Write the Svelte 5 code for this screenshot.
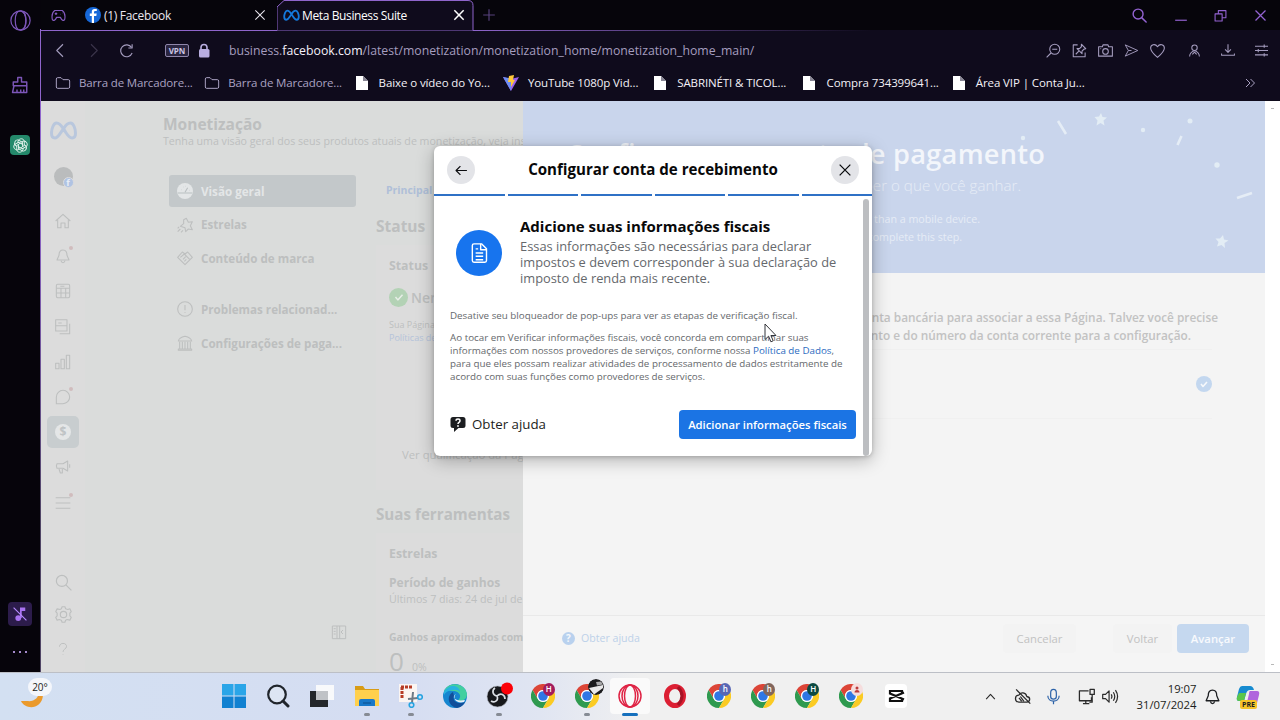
<script lang="ts">
    const icons: Record<string, string[]> = {
        search: ['M10 3a7 7 0 1 1 0 14a7 7 0 0 1 0-14z', 'M15 15l7 7'],
        zoomOut: ['M14 2a8 8 0 1 1 0 16a8 8 0 0 1 0-16z', 'M8 16l-7 7', 'M10 10h8'],
        close: ['M4 4l16 16M20 4L4 20'],
        plus: ['M12 2v20M2 12h20'],
        minimize: ['M2 21h20'],
        restore: ['M2 9h13v13H2z', 'M8 9V3h14v13h-7'],
        back: ['M16 2L6 12l10 10'],
        forward: ['M8 2l10 10L8 22'],
        reload: ['M21 16a9.5 9.5 0 1 1-1-9', 'M21 2v6h-6'],
        folder: ['M2 6q0-2 2-2h5l3 3h8q2 0 2 2v9q0 2-2 2H4q-2 0-2-2z'],
        pin: ['M9 3H2v19h19v-7', 'M15 2l7 7-3 1-3 3 0 4-8-8 4 0 3-3z', 'M11 13l-5 5'],
        camera: ['M1 6h6l1-3h8l1 3h6v15H1z', 'M12 9a4.500 4.500 0 1 1 0 9a4.500 4.500 0 0 1 0-9z', 'M4 9h1'],
        send: ['M2 3l20 9L2 21l5-9z', 'M7 12h5'],
        heart: ['M12 23C6 18 1 13 1 8c0-5 7-8 11-2c4-6 11-3 11 2c0 5-5 10-11 15z'],
        user: ['M12 2a5 5 0 1 1 0 10a5 5 0 0 1 0-10z', 'M3 23c0-6 4-9 9-11c5 2 9 5 9 11', 'M8 19l4-4 4 4'],
        download: ['M12 2v13M7 11l5 5 5-5', 'M1 18v3h22v-3'],
        sliders: ['M0 4h24M0 12h24M0 20h24', 'M17 1v6M6 9v6M17 17v6'],
        more: ['M4 4l8 8-8 8M13 4l8 8-8 8'],
        opera: ['M12 1a11 11 0 1 0 0 22a11 11 0 0 0 0-22z', 'M12 1c-4 0-6 5-6 11s2 11 6 11s6-5 6-11s-2-11-6-11z', 'M12 1c8 2 9 20 0 22'],
        cleaner: ['M9 8V2h5v6h7v5H3V8z', 'M4 13l-2 9h19v-9', 'M8 22v-4M13 22v-4M17 22v-4'],
        gamepad: ['M6 4h12c3 2 5 8 4 14-2 4-5 1-7-3H9c-2 4-5 7-7 3C1 12 3 6 6 4z', 'M6 9h4M8 7v4', 'M15 10h.5M18 8h.5'],
        home: ['M1 12L12 2l11 10', 'M4 10v12h5v-7h6v7h5V10'],
        bell: ['M12 3c-5 0-6 4-6 8l-3 7h18l-3-7c0-4-1-8-6-8z', 'M9 19c1 4 5 4 6 0'],
        planner: ['M2 4q0-2 2-2h16q2 0 2 2v16q0 2-2 2H4q-2 0-2-2z', 'M2 8h20M2 15h20M9 8v14M16 8v14M8 5h6'],
        content: ['M1 1h17v17H1z', 'M1 10h17M5 6h5', 'M22 7v15H7'],
        chart: ['M1 14h5v8H1zM9 8h5v14H9zM17 2h5v20h-5z'],
        inbox: ['M2 22V12A10 10 0 1 1 12 22z'],
        megaphone: ['M3 7h9l7-4v15l-7-4H3q-2-3 0-7z', 'M6 15l2 6h3v-6', 'M22 8v5'],
        menu: ['M1 4h22M1 12h22M1 20h22'],
        gear: ['M12 7.500a4.500 4.500 0 1 1 0 9a4.500 4.500 0 0 1 0-9z', 'M10 1h4l1 3 3 1 3-1 2 4-2 2v4l2 2-2 4-4-1-2 1-1 3h-4l-1-3-3-1-3 1-2-4 2-2v-4L1 8l2-4 4 1 2-1z'],
        question: ['M6 8c0-8 13-7 12 0c0 4-6 4-6 9', 'M12 21v1'],
        star: ['M14 2l3 6 6-1-3 6 3 6-6-1-4 4-1-6-7-2 5-4V4z', 'M1 22l4-4M6 23l3-3M1 17l2-2'],
        handshake: ['M1 11l7-8 4 3 4-3 7 8-11 11z', 'M5 11l6-5 8 8M9 14l4-4M11 17l3-3'],
        alert: ['M12 1a11 11 0 1 1 0 22a11 11 0 0 1 0-22z', 'M12 6v8M12 17v1'],
        bank: ['M2 9q1-5 10-7q9 2 10 7zM2 21h20v2H2z', 'M4 10v11M8 10v11M12 10v11M16 10v11M20 10v11'],
        gauge: ['M1 15h22', 'M12 14l4-7M6 10h.5M9 6h.5M18 11h.5M12 5h.5'],
        panel: ['M2 3h20v19H2z', 'M9 3v19M13 3v19M4 7h3M4 11h3M4 15h3M18 9l-3 3 3 3'],
        arrowLeft: ['M22 12H3M10 4l-8 8 8 8'],
        doc: ['M4 3q0-2 2-2h9l6 6v14q0 2-2 2H6q-2 0-2-2z', 'M14 1v7h7M8 7h3M8 12h9M8 16h9M8 20h9'],
        check: ['M6 12l4 5 8-9'],
        up: ['M4 17l8-9 8 9'],
        cloudOff: ['M7 20h11c5-1 6-7 0-8c-1-6-9-7-11-2c-6 0-7 9 0 10z', 'M3 2l20 20M9 12l5 7M7 14l4 5'],
        mic: ['M12 2c-4 0-4 3-4 5v5c0 5 8 5 8 0V7c0-2 0-5-4-5z', 'M4 11c0 10 16 10 16 0M12 19v4'],
        network: ['M15 4H2v14h17v-5M7 22h9M11 18v4', 'M17 2h6v7h-6zM20 9v11h-4'],
        volume: ['M1 9h4l5-5v16l-5-5H1z', 'M13 9q2 3 0 6M16 6q4 6 0 12M19 3q6 9 0 18'],
    };

    const bookmarks = [
        { kind: 'folder', label: 'Barra de Marcadore...' },
        { kind: 'folder', label: 'Barra de Marcadore...' },
        { kind: 'file', label: 'Baixe o vídeo do Yo...' },
        { kind: 'vite', label: 'YouTube 1080p Vid...' },
        { kind: 'file', label: 'SABRINÉTI & TICOL...' },
        { kind: 'file', label: 'Compra 734399641...' },
        { kind: 'file', label: 'Área VIP | Conta Ju...' },
    ];

    const rail = [
        { icon: 'home' },
        { icon: 'bell', dot: true },
        { icon: 'planner' },
        { icon: 'content' },
        { icon: 'chart' },
        { icon: 'inbox', dot: true },
        { icon: 'money', active: true },
        { icon: 'megaphone' },
        { icon: 'menu', dot: true },
    ];

    const nav = [
        { icon: 'gauge', label: 'Visão geral', active: true },
        { icon: 'star', label: 'Estrelas' },
        { icon: 'handshake', label: 'Conteúdo de marca' },
        { icon: 'alert', label: 'Problemas relacionad...', gap: true },
        { icon: 'bank', label: 'Configurações de paga...' },
    ];

    const apps = [
        { kind: 'windows' },
        { kind: 'search' },
        { kind: 'tasks' },
        { kind: 'explorer', running: true },
        { kind: 'snip', running: true },
        { kind: 'edge' },
        { kind: 'obs', running: true },
        { kind: 'chrome', badge: 'H', tone: 'wine' },
        { kind: 'chrome', badge: '', tone: 'photo', running: true },
        { kind: 'operagx', active: true },
        { kind: 'opera' },
        { kind: 'chrome', badge: 'h', tone: 'indigo' },
        { kind: 'chrome', badge: 'h', tone: 'brown' },
        { kind: 'chrome', badge: 'H', tone: 'green' },
        { kind: 'chrome', badge: '', tone: 'pink' },
        { kind: 'capcut' },
    ];
</script>

{#snippet icon(name: string, size: number, width = 1.6)}
    <svg class="icon" width={size} height={size} viewBox="0 0 24 24" stroke-width={width}>
        {#each icons[name] as d}
            <path {d} />
        {/each}
    </svg>
{/snippet}

{#snippet meta(w: number, h: number)}
    <svg class="meta" width={w} height={h} viewBox="0 0 28 20">
        <path d="M14 8C11 3 9 2 7 2C4 2 2 8 2 12c0 3 1 5 3.500 5C9 17 11 11 14 8c2-4 4-6 7-6c3 0 5 6 5 10c0 3-1 5-3.500 5C19 17 17 12 14 8z" />
    </svg>
{/snippet}

<div class="desktop">
    <div class="browser">
        <aside class="gx">
            <div class="gx-logo">{@render icon('opera', 21, 1.4)}</div>
            <div class="gx-clean">{@render icon('cleaner', 18, 1.9)}</div>
            <div class="gpt">
                <svg width="15" height="15" viewBox="0 0 24 24">
                    {#each [0, 60, 120, 180, 240, 300] as r}
                        <path d="M8 8V5c2-5 9-5 10 0v7l-6 4" transform={`rotate(${r} 12 12)`} />
                    {/each}
                </svg>
            </div>
            <div class="mute">
                <svg width="14" height="14" viewBox="0 0 24 24">
                    <circle cx="9" cy="19" r="5" />
                    <path d="M12 1h9v6h-6v12h-3z" />
                    <path class="slash" d="M1 1l22 22" />
                </svg>
            </div>
            <div class="dots"><i></i><i></i><i></i></div>
        </aside>

        <div class="window">
            <header class="tabs">
                <div class="tab-pad">{@render icon('gamepad', 15, 1.9)}</div>
                <div class="tab first">
                    <svg width="16" height="16" viewBox="0 0 16 16">
                        <circle cx="8" cy="8" r="8" fill="#1668d8" />
                        <path d="M9 16V9h2.300l.4-2.500H9V5q0-1 1.300-1h1.500V2H9.500Q6.800 2 6.800 4.800v1.700H4.800V9h2v7z" fill="#fff" />
                    </svg>
                    <span class="t1">(1) Facebook</span>
                    <b>{@render icon('close', 14, 1.8)}</b>
                </div>
                <div class="tab current">
                    <svg class="outline" width="198" height="31" viewBox="0 0 198 31">
                        <path d="M0 30.500V7L7 .5h184q5 0 5 5v25" />
                    </svg>
                    {@render meta(17, 13)}
                    <span class="t2">Meta Business Suite</span>
                    <b>{@render icon('close', 14, 2.6)}</b>
                </div>
                <div class="new">{@render icon('plus', 14, 2)}</div>
                <div class="controls">
                    {@render icon('search', 17, 2)}
                    {@render icon('minimize', 14, 2)}
                    {@render icon('restore', 13, 2)}
                    {@render icon('close', 15, 2)}
                </div>
            </header>

            <div class="toolbar">
                <span class="back">{@render icon('back', 15, 1.7)}</span>
                <span class="fwd">{@render icon('forward', 15, 1.7)}</span>
                <span class="reload">{@render icon('reload', 15, 1.8)}</span>
                <span class="vpn">VPN</span>
                <svg class="lock" width="12" height="15" viewBox="0 0 12 15">
                    <path d="M3 7V4.500a3 3 0 0 1 6 0V7" fill="none" stroke="#b9aee0" stroke-width="1.600" />
                    <rect x="1" y="6" width="10.500" height="8.500" rx="1.500" fill="#b9aee0" />
                </svg>
                <span class="url">business.<em>facebook.com</em>/latest/monetization/monetization_home/monetization_home_main/</span>
                <div class="actions">
                    {@render icon('zoomOut', 15, 1.7)}
                    {@render icon('pin', 15, 1.7)}
                    {@render icon('camera', 15, 1.7)}
                    {@render icon('send', 15, 1.5)}
                    {@render icon('heart', 15, 1.7)}
                </div>
                <div class="actions right">
                    {@render icon('user', 13, 1.9)}
                    {@render icon('download', 14, 1.8)}
                    {@render icon('sliders', 13, 2)}
                </div>
            </div>

            <nav class="bookmarks">
                {#each bookmarks as b}
                    <div class="bookmark" class:bright={b.kind !== 'folder'}>
                        {#if b.kind === 'folder'}
                            {@render icon('folder', 16, 1.5)}
                        {:else if b.kind === 'vite'}
                            <svg width="16" height="16" viewBox="0 0 16 16">
                                <path d="M0 2l8 14 8-14-8 2z" fill="#9b62ee" />
                                <path d="M0 2l8 14V3.500z" fill="#6d8df3" />
                                <path d="M6 1l5-1-1 5h2l-4 7V7H5z" fill="#ffc83a" />
                            </svg>
                        {:else}
                            <svg width="16" height="16" viewBox="0 0 16 16">
                                <path d="M2 1h7l5 5v9H2z" fill="#fff" />
                                <path d="M9 1v5h5z" fill="#888594" />
                            </svg>
                        {/if}
                        <span>{b.label}</span>
                    </div>
                {/each}
                <div class="more">{@render icon('more', 12, 2)}</div>
            </nav>

            <main class="page">
                <section class="suite">
                    <aside class="rail">
                        <div class="rail-logo">{@render meta(29, 20)}</div>
                        <div class="avatar"><i></i><u>f</u></div>
                        {#each rail as r}
                            <div class="rail-item" class:active={r.active}>
                                {#if r.icon === 'money'}
                                    <span class="coin">$</span>
                                {:else}
                                    {@render icon(r.icon, 16, 1.6)}
                                {/if}
                                {#if r.dot}<i class="dot"></i>{/if}
                            </div>
                        {/each}
                        <div class="rail-end">
                            {@render icon('search', 19, 1.5)}
                            {@render icon('gear', 17, 1.6)}
                            <span>{@render icon('question', 14, 1.7)}</span>
                        </div>
                    </aside>

                    <div class="suite-body">
                        <h1>Monetização</h1>
                        <p class="lead">Tenha uma visão geral dos seus produtos atuais de monetização, veja ins</p>
                        <div class="columns">
                            <div class="side">
                                {#each nav as n}
                                    <div class="side-item" class:active={n.active} class:gap={n.gap}>
                                        <span class="side-icon">{@render icon(n.icon, 16, 1.6)}</span>
                                        {n.label}
                                    </div>
                                {/each}
                                <div class="toggle">{@render icon('panel', 16, 1.5)}</div>
                            </div>
                            <div class="feed">
                                <div class="main-tab">Principal</div>
                                <h2>Status</h2>
                                <div class="card status">
                                    <h3>Status</h3>
                                    <div class="ok"><span>{@render icon('check', 14, 2.5)}</span>Nen</div>
                                    <p>Sua Página</p>
                                    <p class="link">Políticas de</p>
                                    <div class="qualify">Ver qualificação da Pág</div>
                                </div>
                                <h2 class="tools">Suas ferramentas</h2>
                                <div class="card earn">
                                    <h3>Estrelas</h3>
                                    <h4>Período de ganhos</h4>
                                    <p class="range">Últimos 7 dias: 24 de jul de</p>
                                    <h5>Ganhos aproximados com</h5>
                                    <div class="total"><big>0</big><small>0%</small></div>
                                </div>
                            </div>
                        </div>
                    </div>
                </section>

                <section class="drawer">
                    <div class="banner">
                        <h2>Configurar sua conta de pagamento</h2>
                        <p class="b1">para receber o que você ganhar.</p>
                        <p class="b2">computer rather than a mobile device.</p>
                        <p class="b3">documents to complete this step.</p>
                        <svg class="confetti" width="742" height="172" viewBox="523 101 742 172">
                            <path d="M1058 121l8 13M1181.500 136l-4 9M1237 198l15-5" />
                            <g>
                                <circle cx="1143" cy="130" r="2.200" />
                                <circle cx="1190" cy="121" r="2.500" />
                                <circle cx="1023" cy="138" r="2.200" />
                                <circle cx="1217" cy="165" r="2.700" />
                                <path d="M1101 113l1.500 4 4.500.5-3.500 3 1 5-4-2.500-4 2.500 1-5-3-3.500 4.500-.5z" />
                                <path d="M1223 235l1 4.500 4.500 1-4 2.500.5 5-3.500-3-4.500 1.500 1.500-4.500-3-3.500h4.500z" />
                            </g>
                        </svg>
                    </div>
                    <div class="drawer-main">
                        <p class="d1">conta bancária para associar a essa Página. Talvez você precise</p>
                        <p class="d2">roteamento e do número da conta corrente para a configuração.</p>
                        <div class="choice"><span>{@render icon('check', 12, 3.2)}</span></div>
                    </div>
                    <footer class="drawer-foot">
                        <span class="q">?</span>
                        <span class="help">Obter ajuda</span>
                        <span class="btn cancel">Cancelar</span>
                        <span class="btn return">Voltar</span>
                        <span class="btn next">Avançar</span>
                    </footer>
                </section>
                <div class="scroll"><i></i><i></i></div>

                <section class="dialog">
                    <header>
                        <span class="round">{@render icon('arrowLeft', 13, 2.2)}</span>
                        <h2>Configurar conta de recebimento</h2>
                        <span class="round">{@render icon('close', 16, 1.9)}</span>
                    </header>
                    <div class="steps">
                        {#each Array(6) as _}<i></i>{/each}
                    </div>
                    <div class="dialog-body">
                        <div class="content">
                            <div class="intro">
                                <span class="disc">{@render icon('doc', 20, 1.7)}</span>
                                <div>
                                    <h3>Adicione suas informações fiscais</h3>
                                    <p>Essas informações são necessárias para declarar<br />impostos e devem corresponder à sua declaração de<br />imposto de renda mais recente.</p>
                                </div>
                            </div>
                            <p class="fine">Desative seu bloqueador de pop-ups para ver as etapas de verificação fiscal.</p>
                            <p class="fine">Ao tocar em Verificar informações fiscais, você concorda em compartilhar suas<br />informações com nossos provedores de serviços, conforme nossa <a href="#dados">Política de Dados</a>,<br />para que eles possam realizar atividades de processamento de dados estritamente de<br />acordo com suas funções como provedores de serviços.</p>
                            <div class="end">
                                <svg width="16" height="16" viewBox="0 0 16 16">
                                    <path d="M3 1h10q2.500 0 2.500 2.500v6Q15.500 12 13 12H8.500L4 16v-4H3Q.5 12 .5 9.500v-6Q.5 1 3 1z" fill="#1c1e21" />
                                    <path d="M6 4.800c0-2.300 4-2.300 4 0C10 6.500 8 6.300 8 8" fill="none" stroke="#fff" stroke-width="1.500" />
                                    <circle cx="8" cy="10" r=".9" fill="#fff" />
                                </svg>
                                <span>Obter ajuda</span>
                                <button>Adicionar informações fiscais</button>
                            </div>
                        </div>
                        <div class="thumb"></div>
                    </div>
                </section>

                <svg class="cursor" width="14" height="22" viewBox="0 0 14 22">
                    <path d="M1 1v15.500l3.600-3.300 2.300 5.600 2.300-1-2.300-5.300H12z" />
                </svg>
            </main>
        </div>
    </div>

    <footer class="taskbar">
        <div class="weather">
            <svg width="24" height="24" viewBox="0 0 24 24"><path d="M19 6c0 7-5 11-12 10H1c4 9 21 9 22-6z" /></svg>
            <span>20°</span>
        </div>
        <div class="apps">
            {#each apps as a}
                <div class="app" class:current={a.active} class:running={a.running}>
                    <div class="glyph">
                        {#if a.kind === 'windows'}
                            <svg width="24" height="24" viewBox="0 0 24 24">
                                <path d="M0 0h11.500v11.500H0zM12.500 0H24v11.500H12.500z" fill="#2aa5e8" />
                                <path d="M0 12.500h11.500V24H0zM12.500 12.500H24V24H12.500z" fill="#1181d1" />
                            </svg>
                        {:else if a.kind === 'search'}
                            <svg width="24" height="24" viewBox="0 0 24 24" fill="none" stroke="#20252c" stroke-width="2.200" stroke-linecap="round">
                                <circle cx="11" cy="10.500" r="8.800" fill="#dde5f3" /><path d="M17 17l5 5" stroke-width="3" />
                            </svg>
                        {:else if a.kind === 'tasks'}
                            <svg width="24" height="24" viewBox="0 0 24 24">
                                <path d="M0 7h18v16H0z" fill="#24272b" /><path d="M6 1h18v15H6z" fill="#f8f9fb" /><path d="M6 7h12v9H6z" fill="#bfc2c6" />
                            </svg>
                        {:else if a.kind === 'explorer'}
                            <svg width="26" height="24" viewBox="0 0 26 24">
                                <path d="M1 2h8l2 3h14v9H1z" fill="#d89c16" /><path d="M1 6h24v16H1z" fill="#ffd04d" />
                                <path d="M5 22v-5q0-2 2-2h12q2 0 2 2v5z" fill="#1878c9" /><path d="M9 19h8" stroke="#0b4c8a" />
                            </svg>
                        {:else if a.kind === 'snip'}
                            <svg width="24" height="24" viewBox="0 0 24 24" fill="none">
                                <path d="M0 0h18v18H0z" fill="#fbf5f2" /><path d="M2 3h12M3 3v12" stroke="#b63b25" stroke-width="3" stroke-dasharray="3 1" />
                                <path d="M9 15l10-1M14 8l-1 11" stroke="#6f7984" stroke-width="2" /><circle cx="21" cy="13" r="2.300" stroke="#25a3e0" stroke-width="1.600" /><circle cx="12.500" cy="21" r="2.300" stroke="#25a3e0" stroke-width="1.600" />
                            </svg>
                        {:else if a.kind === 'edge'}
                            <svg width="24" height="24" viewBox="0 0 24 24">
                                <circle cx="12" cy="12" r="12" fill="#1686d0" />
                                <path d="M1 8C4-3 22-2 24 10c0 5-4 8-10 7 5-3 4-9-3-10Q4 6 1 8z" fill="#43cfa0" />
                                <path d="M1 8C7-2 17 2 17 8q-2-3-8-2-6 1-8 5z" fill="#28b3df" />
                                <path d="M10 8c-7 4-5 14 4 16 5-1 7-4 8-6-7 3-13-1-11-6z" fill="#124f9a" />
                                <path d="M13 10c-5 3-1 8 9 6l-1 2c-8 2-12-4-8-8z" fill="#e9eff8" />
                            </svg>
                        {:else if a.kind === 'obs'}
                            <svg width="28" height="28" viewBox="0 0 28 28">
                                <circle cx="12.500" cy="14.500" r="10.500" fill="#17181b" stroke="#aeb3bd" stroke-width=".6" />
                                <path d="M12 14c-5-1-5-6-2-8M12 14c4-4 8-1 8 3M12 14c2 5-3 7-6 5" fill="none" stroke="#dcdfe4" stroke-width="1.700" />
                                <circle cx="22" cy="6.500" r="6" fill="#fb0007" />
                            </svg>
                        {:else if a.kind === 'chrome'}
                            <svg width="24" height="24" viewBox="0 0 24 24">
                                <path d="M1.600 6A12 12 0 0 1 22.400 6H12A6 6 0 0 0 6.800 15z" fill="#dc4537" />
                                <path d="M1.600 6A12 12 0 0 0 12 24l5.200-9A6 6 0 0 1 6.800 15z" fill="#2f9a4f" />
                                <path d="M22.400 6A12 12 0 0 1 12 24l5.200-9A6 6 0 0 0 12 6z" fill="#fbcb23" />
                                <circle cx="12" cy="12" r="6" fill="#fff" /><circle cx="12" cy="12" r="4.800" fill="#2f77e5" />
                            </svg>
                            {#if a.tone === 'photo'}
                                <svg class="badge photo" width="16" height="16" viewBox="0 0 16 16">
                                    <circle cx="8" cy="8" r="8" fill="#1b1b1d" />
                                    <path d="M1 9l14-3v3L6 15.500z" fill="#e9e9ea" /><path d="M8 3l5-.5 2 3-6 1z" fill="#a9a9ab" />
                                </svg>
                            {:else if a.tone === 'pink'}
                                <svg class="badge pink" width="12" height="13" viewBox="0 0 12 13">
                                    <circle cx="6" cy="5" r="1.500" fill="#bd3a3a" /><path d="M3.500 9.500q0-2.500 2.500-2.500t2.500 2.500z" fill="#bd3a3a" />
                                </svg>
                            {:else}
                                <span class="badge {a.tone}">{a.badge}</span>
                            {/if}
                        {:else if a.kind === 'operagx'}
                            <svg width="24" height="24" viewBox="0 0 24 24" fill="none" stroke="#df2445" stroke-width="1.500">
                                <circle cx="12" cy="12" r="11" /><ellipse cx="12" cy="12" rx="5.500" ry="11" /><ellipse cx="12" cy="12" rx="8" ry="11" />
                            </svg>
                        {:else if a.kind === 'opera'}
                            <svg width="24" height="24" viewBox="0 0 24 24" fill="none" stroke="#dc1f33">
                                <ellipse cx="12" cy="12" rx="8.500" ry="9.500" stroke-width="5" /><path d="M15 3q8 9 0 18" stroke="#a71325" stroke-width="3" />
                            </svg>
                        {:else}
                            <svg width="22" height="24" viewBox="0 0 22 24" fill="none">
                                <rect width="22" height="24" rx="4" fill="#fff" /><path d="M17 9V7H5v2.500l14 6M17 15v2H5v-2.500l14-6" stroke="#111" stroke-width="2.200" />
                            </svg>
                        {/if}
                    </div>
                    <i class="mark"></i>
                </div>
            {/each}
        </div>
        <div class="tray">
            {@render icon('up', 13, 2)}
            {@render icon('cloudOff', 17, 1.8)}
            <span class="mic">{@render icon('mic', 17, 1.7)}</span>
            {@render icon('network', 17, 1.8)}
            <span class="vol">{@render icon('volume', 17, 1.7)}</span>
        </div>
        <div class="clock">19:07<br />31/07/2024</div>
        <div class="notify">{@render icon('bell', 17, 1.8)}</div>
        <div class="copilot">
            <svg width="24" height="24" viewBox="0 0 24 24">
                <path d="M6 1h8q3 0 4 4h-4q-3 0-4 4L8 16H3q-3 0-2-4L3 4q1-3 3-3z" fill="#168bd0" />
                <path d="M3 8h7l-2 8H3q-3 0-2-4z" fill="#5bc64b" />
                <path d="M14 6h7q3 0 2 4l-2 8q-1 4-4 4H7q3-1 4-5l2-8q0-3 1-3z" fill="#b065dd" />
            </svg>
            <span>PRE</span>
        </div>
    </footer>
</div>

<style>
    :global(body) {
        margin: 0;
        overflow: hidden;
    }

    .desktop {
        width: 1280px;
        height: 720px;
        overflow: hidden;
        font-family: 'Open Sans', 'Noto Sans', sans-serif;
        color: #1c1e21;
    }

    .desktop * {
        box-sizing: border-box;
    }

    h1, h2, h3, h4, h5, p {
        margin: 0;
        white-space: nowrap;
    }

    svg {
        display: block;
        flex: none;
    }

    .icon {
        fill: none;
        stroke: currentColor;
        stroke-linejoin: round;
    }

    .meta path {
        fill: none;
        stroke: currentColor;
        stroke-width: 3;
    }

    .browser {
        display: flex;
        height: 672px;
        background: #06040b;
    }

    /* browser sidebar */
    .gx {
        width: 40px;
        display: flex;
        flex-direction: column;
        align-items: center;
        color: #7c56b8;
    }

    .gx-logo {
        margin-top: 10px;
    }

    .gx-clean {
        margin-top: 45px;
    }

    .gpt {
        display: grid;
        place-items: center;
        width: 20px;
        height: 20px;
        margin-top: 41px;
        border-radius: 4px;
        background: #24896b;
    }

    .gpt path {
        fill: none;
        stroke: #e5f3ee;
        stroke-width: 1.5;
    }

    .mute {
        display: grid;
        place-items: center;
        width: 24px;
        height: 24px;
        margin-top: 447px;
        border-radius: 4px;
        background: #2c1c4b;
    }

    .mute svg {
        fill: #a873f0;
    }

    .mute .slash {
        stroke: #b68aff;
        stroke-width: 2;
    }

    .dots {
        display: flex;
        gap: 4px;
        margin-top: 25px;
    }

    .dots i {
        width: 2px;
        height: 2px;
        background: #a48acc;
    }

    .window {
        width: 1240px;
        border-left: 1px solid #4c3a6e;
        border-image: linear-gradient(#06040b 30px, #8f65cc 30px, #8f65cc 200px, #504565 520px) 1;
    }

    /* tab strip */
    .tabs {
        display: flex;
        align-items: center;
        height: 31px;
        border-bottom: 1px solid;
        border-image: linear-gradient(90deg, #8f65cc 430px, #0f0b1c 830px) 1;
        background: #06050b;
        color: #e9e6ef;
        font-size: 12px;
    }

    .tab-pad {
        width: 44px;
        padding-left: 10px;
        color: #8359bd;
    }

    .tab {
        display: flex;
        align-items: center;
        height: 30px;
    }

    .tab b {
        margin-left: auto;
    }

    .first {
        width: 192px;
        padding-right: 10px;
    }

    .t1 {
        margin-left: 3px;
        letter-spacing: -0.3px;
    }

    .current {
        position: relative;
        width: 197px;
        padding: 0 8px 0 6px;
        color: #fff;
    }

    .current > :not(.outline) {
        position: relative;
    }

    .outline {
        position: absolute;
        left: 0;
        top: 0;
    }

    .outline path {
        fill: #0f0b1c;
        stroke: #8f65cc;
    }

    .current .meta {
        color: #1479dc;
    }

    .t2 {
        margin-left: 2px;
        letter-spacing: -0.38px;
    }

    .new {
        margin-left: 8px;
        color: #57427d;
    }

    .controls {
        display: flex;
        align-items: center;
        gap: 26px;
        margin-left: auto;
        padding-right: 12px;
        color: #9363d2;
    }

    .toolbar {
        display: flex;
        align-items: center;
        height: 38px;
        background: #0f0b1c;
        color: #a59dbf;
    }

    .back {
        margin-left: 12px;
    }

    .fwd {
        margin-left: 18px;
        color: #3b354b;
    }

    .reload {
        margin-left: 18px;
    }

    .vpn {
        width: 24px;
        height: 13px;
        margin-left: 31px;
        border: 1px solid #8f86aa;
        border-radius: 2px;
        background: #2a2540;
        color: #cbc4e2;
        font-size: 8px;
        font-weight: 700;
        line-height: 11px;
        text-align: center;
    }

    .lock {
        margin-left: 9px;
    }

    .url {
        margin-left: 19px;
        font-size: 12.27px;
        white-space: nowrap;
    }

    .url em {
        color: #f4f1fb;
        font-style: normal;
    }

    .actions {
        display: flex;
        align-items: center;
        gap: 11px;
        margin-left: auto;
    }

    .right {
        gap: 20px;
        margin: 0 12px 0 23px;
    }

    .bookmarks {
        display: flex;
        align-items: center;
        height: 32px;
        padding: 0 24px 5px 14px;
        background: #0f0b1c;
        color: #aaa2c2;
        font-size: 11.5px;
    }

    .bookmark {
        display: flex;
        align-items: center;
        gap: 8px;
        width: 149.3px;
        letter-spacing: -0.14px;
        white-space: nowrap;
    }

    .bright {
        gap: 9px;
        color: #f3f1f7;
        letter-spacing: -0.1px;
    }

    .more {
        margin-left: auto;
    }

    /* page */
    .page {
        position: relative;
        display: flex;
        height: 571px;
        overflow: hidden;
        background: #fff;
    }

    .suite {
        display: flex;
        width: 482px;
        overflow: hidden;
        background: #dadcdb;
        color: #bdbfbf;
    }

    .rail {
        display: flex;
        flex: none;
        flex-direction: column;
        align-items: center;
        width: 44px;
        padding-top: 20px;
        background: #dcdcdc;
        color: #bdbfbf;
    }

    .rail-logo {
        color: #b9c7dd;
    }

    .avatar {
        position: relative;
        width: 19px;
        height: 19px;
        margin: 26px 0 19px;
        border-radius: 50%;
        background: #babcbd;
    }

    .avatar u {
        position: absolute;
        right: -1px;
        bottom: -2px;
        width: 11px;
        height: 11px;
        border: 1px solid #dcdcdc;
        border-radius: 50%;
        background: #b0c3e3;
        color: #e8edf5;
        font-size: 9px;
        font-weight: 700;
        line-height: 10px;
        text-align: center;
        text-decoration: none;
    }

    .rail-item {
        position: relative;
        display: grid;
        place-items: center;
        width: 32px;
        height: 32px;
        margin-bottom: 3.2px;
        border-radius: 5px;
    }

    .rail-item.active {
        background: #c8cdcf;
    }

    .coin {
        width: 16px;
        height: 16px;
        border-radius: 50%;
        background: #e4e6e7;
        color: #bfc3c5;
        font-size: 12px;
        font-weight: 700;
        line-height: 16px;
        text-align: center;
    }

    .dot {
        position: absolute;
        top: 6px;
        right: 6px;
        width: 4px;
        height: 4px;
        border-radius: 50%;
        background: #d0bcbd;
    }

    .rail-end {
        display: flex;
        flex-direction: column;
        align-items: center;
        gap: 14px;
        margin: auto 0 16px;
    }

    .rail-end span {
        padding-top: 5px;
    }

    .suite-body {
        flex: none;
        width: 700px;
        padding-top: 13px;
    }

    h1 {
        margin-left: 78px;
        font-size: 15.5px;
        line-height: 20px;
        font-weight: 700;
    }

    .lead {
        margin-left: 78px;
        font-size: 10.65px;
        line-height: 15px;
    }

    .columns {
        display: flex;
        padding-top: 26px;
    }

    .side {
        width: 291px;
        padding-left: 84px;
    }

    .side-item {
        display: flex;
        align-items: center;
        width: 187px;
        height: 32px;
        margin-bottom: 1.7px;
        padding-left: 8px;
        border-radius: 3px;
        font-size: 11.65px;
        font-weight: 700;
        white-space: nowrap;
    }

    .side-item.gap {
        margin-top: 19px;
    }

    .side-item.active {
        background: #c3c8ca;
        color: #e3e6e7;
    }

    .side-icon {
        width: 24px;
    }

    .active .side-icon :global(svg) {
        border-radius: 50%;
        background: #e3e6e7;
        color: #b9bfc1;
    }

    .toggle {
        margin: 265px 0 0 162px;
    }

    .feed {
        width: 409px;
    }

    .main-tab {
        height: 29px;
        padding-left: 10px;
        color: #afbfd8;
        font-size: 10.5px;
        font-weight: 700;
        line-height: 31px;
    }

    .feed h2 {
        height: 41px;
        font-size: 15.5px;
        font-weight: 700;
        line-height: 44px;
    }

    .card {
        padding-left: 13px;
        background: #dcdcdc;
    }

    .status {
        height: 245px;
        padding-top: 11px;
    }

    h3 {
        font-size: 12.3px;
        line-height: 20px;
    }

    .ok {
        display: flex;
        align-items: center;
        gap: 3px;
        height: 42px;
        font-size: 14px;
        font-weight: 600;
    }

    .ok span {
        padding: 2.500px;
        border-radius: 50%;
        background: #b3d2b5;
        color: #e8eee8;
    }

    .status p {
        font-size: 9px;
        line-height: 13px;
    }

    .status .link {
        color: #b5c3da;
    }

    .qualify {
        margin: 102px 0 0 13px;
        font-size: 11.3px;
        line-height: 17px;
    }

    .feed .tools {
        height: 43px;
        font-size: 15.2px;
        line-height: 48px;
    }

    .earn {
        height: 160px;
        padding-top: 11px;
    }

    h4 {
        margin-top: 9px;
        font-size: 12.1px;
        line-height: 20px;
    }

    .range {
        font-size: 10.7px;
        line-height: 13px;
    }

    h5 {
        margin-top: 23px;
        font-size: 10.4px;
        line-height: 16px;
    }

    .total {
        display: flex;
        align-items: baseline;
        gap: 8px;
        line-height: 33px;
    }

    .total big {
        font-size: 26px;
    }

    .total small {
        font-size: 10.5px;
    }

    .drawer {
        display: flex;
        flex-direction: column;
        width: 742px;
        background: #f4f4f4;
    }

    .banner {
        position: relative;
        height: 172px;
        padding: 34px 0 0 43px;
        background: #c9d5ec;
        color: #e6ecf6;
    }

    .banner h2 {
        width: 480px;
        color: #f3f6fb;
        font-size: 27.200px;
        font-weight: 600;
        letter-spacing: 0.250px;
        line-height: 38px;
    }

    .banner p {
        text-align: right;
    }

    .banner .b1 {
        width: 455px;
        font-size: 15.200px;
        font-weight: 300;
        line-height: 24px;
    }

    .banner .b2 {
        width: 414px;
        margin-top: 13px;
        font-size: 10.7px;
        line-height: 18px;
    }

    .banner .b3 {
        width: 396px;
        font-size: 10.7px;
        line-height: 18px;
    }

    .confetti {
        position: absolute;
        inset: 0;
        fill: #e3edf5;
    }

    .confetti > path {
        stroke: #e5edf6;
        stroke-width: 2.600;
    }

    .drawer-main {
        flex: 1;
        padding-top: 36px;
        color: #c2c2c2;
        font-size: 11.850px;
        font-weight: 600;
        line-height: 17.500px;
        text-align: right;
    }

    .d1 {
        padding-right: 47px;
    }

    .d2 {
        padding-right: 74px;
    }

    .choice {
        display: flex;
        align-items: center;
        justify-content: flex-end;
        height: 70px;
        margin: 5px 53px 0 40px;
        border: 1px solid #f0f0f0;
        border-width: 1px 0;
    }

    .choice span {
        padding: 2px;
        border-radius: 50%;
        background: #c3d7ef;
        color: #f6f8fb;
    }

    .drawer-foot {
        display: flex;
        align-items: center;
        height: 57px;
        padding: 0 16px 12px 39px;
        border-top: 1px solid #e9e9e9;
        background: #f5f5f5;
        font-size: 11.3px;
    }

    .q {
        width: 13px;
        height: 13px;
        border-radius: 50%;
        background: #b9d1ee;
        color: #f4f7fb;
        font-size: 10px;
        font-weight: 700;
        line-height: 13px;
        text-align: center;
    }

    .help {
        margin-left: 6px;
        color: #bdd1e9;
        font-size: 10.6px;
    }

    .btn {
        height: 29px;
        border-radius: 4px;
        background: #f3f3f3;
        color: #c2c2c2;
        line-height: 29px;
        text-align: center;
    }

    .cancel {
        width: 73px;
        margin-left: auto;
    }

    .return {
        width: 59px;
        margin-left: 37px;
    }

    .next {
        width: 72px;
        margin-left: 5px;
        background: #c5d8ef;
        color: #f8fafd;
        font-weight: 600;
    }

    .scroll {
        display: flex;
        flex-direction: column;
        justify-content: space-between;
        width: 15px;
        padding: 7px 6px;
    }

    .scroll i {
        width: 3px;
        height: 1px;
        background: #b8b8b8;
    }

    /* dialog sits over the whole page */
    .dialog {
        position: absolute;
        left: 393px;
        top: 45px;
        width: 438px;
        height: 310px;
        overflow: hidden;
        border-radius: 6px;
        background: #fff;
        box-shadow: 0 4px 18px rgba(0, 0, 0, 0.28), 0 1px 4px rgba(0, 0, 0, 0.18);
    }

    .dialog header {
        display: flex;
        align-items: center;
        justify-content: space-between;
        height: 48px;
        padding: 0 13px;
    }

    .dialog h2 {
        padding-bottom: 2px;
        color: #080809;
        font-size: 15.1px;
        font-weight: 700;
        line-height: 20px;
    }

    .round {
        display: grid;
        place-items: center;
        width: 28px;
        height: 28px;
        border-radius: 50%;
        background: #e3e4e8;
        color: #0c0d10;
    }

    .steps {
        display: flex;
        gap: 3px;
    }

    .steps i {
        flex: 1;
        height: 2px;
        background: #2f71c6;
    }

    .dialog-body {
        display: flex;
        height: 260px;
    }

    .content {
        width: 429px;
        padding: 19px 7px 0 16px;
    }

    .intro {
        display: flex;
        align-items: center;
        height: 71px;
        padding-left: 6px;
    }

    .disc {
        display: grid;
        place-items: center;
        width: 46px;
        height: 46px;
        margin: 4px 18px 0 0;
        border-radius: 50%;
        background: #1774ee;
        color: #fff;
    }

    .intro h3 {
        padding-bottom: 2px;
        color: #080809;
        font-size: 15px;
        line-height: 20px;
    }

    .intro p {
        color: #65686c;
        font-size: 12.85px;
        line-height: 16px;
    }

    .fine {
        margin-top: 10px;
        color: #65686c;
        font-size: 9.8px;
        line-height: 12.800px;
    }

    .intro + .fine {
        margin-top: 23.500px;
    }

    .fine a {
        color: #2c6cbf;
        text-decoration: none;
    }

    .end {
        display: flex;
        align-items: center;
        margin-top: 26.500px;
        font-size: 13.3px;
    }

    .end span {
        margin-left: 6px;
    }

    .end button {
        width: 177px;
        height: 29px;
        margin-left: auto;
        padding: 0;
        border: 0;
        border-radius: 4px;
        background: #1b74e4;
        color: #fff;
        font: 600 11.25px 'Open Sans', sans-serif;
        white-space: nowrap;
    }

    .thumb {
        width: 6px;
        margin-top: 3px;
        border-radius: 3px;
        background: #bcbec1;
    }

    .cursor {
        position: absolute;
        left: 723px;
        top: 222px;
        fill: #fff;
        stroke: #33353a;
    }

    /* taskbar */
    .taskbar {
        display: flex;
        align-items: center;
        height: 48px;
        border-top: 1px solid #bcbfc6;
        background: linear-gradient(90deg, #d3e0f2, #d5ddf2 400px, #e0e5f2 540px, #f0f0f0 640px);
    }

    .weather {
        position: relative;
        width: 212.3px;
        padding-left: 20px;
    }

    .weather path {
        fill: #eb9a2c;
    }

    .weather span {
        position: absolute;
        left: 28px;
        top: -7px;
        width: 24px;
        height: 18px;
        border-radius: 9px;
        background: #f4f6fb;
        font-size: 10px;
        line-height: 18px;
        text-align: center;
    }

    .apps {
        display: flex;
    }

    .app {
        display: flex;
        flex-direction: column;
        align-items: center;
        justify-content: space-between;
        width: 44.08px;
        height: 38px;
    }

    .glyph {
        position: relative;
        display: grid;
        place-items: center;
        width: 40px;
        height: 36px;
    }

    .mark {
        flex: none;
        width: 6px;
        height: 3px;
        margin-top: -1px;
        border-radius: 2px;
    }

    .running .mark {
        background: #868b94;
    }

    .app.current .glyph {
        background: #fafafa;
        border-radius: 4px;
    }

    .app.current .mark {
        width: 16px;
        background: #1670bd;
    }

    .badge {
        position: absolute;
        right: 8px;
        top: 5px;
        width: 12px;
        height: 13px;
        border-radius: 50%;
        color: #fff;
        font-size: 8px;
        font-weight: 600;
        line-height: 12px;
        text-align: center;
    }

    .wine { background: #a31c5c; }
    .indigo { background: #5867b5; }
    .brown { background: #82665c; }
    .green { background: #0c4a42; }
    .pink { background: #f5dddd; }

    .photo {
        top: 1px;
        right: 3px;
        width: 16px;
        height: 16px;
    }

    .tray {
        display: flex;
        align-items: center;
        gap: 15.3px;
        margin-left: 66.3px;
        color: #2a2a2a;
    }

    .tray > :global(svg:first-child) {
        margin-right: 2px;
    }

    .mic {
        margin-left: -1px;
        color: #2c62a8;
    }

    .vol {
        margin-left: -8px;
    }

    .clock {
        margin-left: auto;
        font-size: 11.3px;
        line-height: 15.500px;
        text-align: right;
    }

    .notify {
        margin-left: 7px;
    }

    .copilot {
        position: relative;
        margin: 0 20px 0 15.5px;
    }

    .copilot span {
        position: absolute;
        left: 4px;
        top: 15px;
        padding: 0 2px;
        border-radius: 2px;
        background: #f6c32a;
        font-size: 7px;
        font-weight: 700;
        line-height: 9px;
    }
</style>
